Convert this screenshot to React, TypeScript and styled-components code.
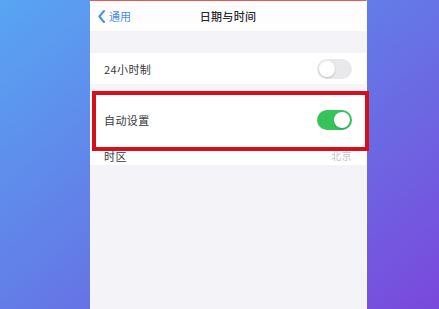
import React from "react";
import styled, { createGlobalStyle } from "styled-components";

const Global = createGlobalStyle`
  html, body { margin: 0; padding: 0; }
  body {
    width: 439px; height: 309px; overflow: hidden;
    font-family: "Noto Sans CJK SC", "Noto Sans", sans-serif;
  }
`;

const Stage = styled.div`
  width: 439px;
  height: 309px;
  background: linear-gradient(140deg, #58a5f3 0%, #6479e6 50%, #7a48dc 100%);
  padding-left: 90px;
  box-sizing: border-box;
  display: flex;
`;

const Phone = styled.div`
  position: relative;
  width: 277px;
  height: 309px;
  background: #f3f3f8;
  border-top: 1px solid #e45a5a;
  border-right: 1px solid #fbfbff;
  box-sizing: border-box;
  display: flex;
  flex-direction: column;
`;

const NavBar = styled.div`
  height: 30px;
  background: #fdfdfe;
  display: grid;
  grid-template-columns: 1fr auto 1fr;
  align-items: center;
  padding: 0 8px;
`;

const Back = styled.div`
  display: flex;
  align-items: center;
  gap: 4px;
  color: #4b8fe8;
  font-size: 11px;
`;

const Title = styled.div`
  font-size: 11px;
  font-weight: 500;
  color: #2a2a2e;
  letter-spacing: 0.3px;
`;

const Spacer = styled.div<{ $h: number; $bg?: string }>`
  height: ${(p) => p.$h}px;
  background: ${(p) => p.$bg || "transparent"};
`;

const Row = styled.div<{ $h: number; $pt?: number }>`
  height: ${(p) => p.$h}px;
  background: #ffffff;
  display: flex;
  align-items: center;
  justify-content: space-between;
  padding: ${(p) => p.$pt || 0}px 14px 0 14px;
  box-sizing: border-box;
`;

const Label = styled.span`
  font-size: 11px;
  color: #38383c;
  letter-spacing: 0.4px;
`;

const Detail = styled.span`
  font-size: 10px;
  color: #c4c4c8;
  letter-spacing: 0.5px;
`;

const Toggle = styled.div<{ $on: boolean }>`
  position: relative;
  width: 35px;
  height: 20px;
  border-radius: 10px;
  background: ${(p) => (p.$on ? "#35c35a" : "#e9e9ec")};
  &::after {
    content: "";
    position: absolute;
    top: 2px;
    left: ${(p) => (p.$on ? "17px" : "2px")};
    width: 16px;
    height: 16px;
    border-radius: 50%;
    background: #ffffff;
    box-shadow: 0 1px 2px rgba(0, 0, 0, 0.18);
  }
`;

const Highlight = styled.div`
  position: absolute;
  left: 2px;
  top: 90px;
  width: 277px;
  height: 60px;
  border: 4px solid #d5101c;
  box-sizing: border-box;
  pointer-events: none;
`;

export default function App() {
  return (
    <>
      <Global />
      <Stage>
        <Phone>
          <NavBar>
            <Back>
              <svg width="7" height="13" viewBox="0 0 7 13">
                <polyline
                  points="6,1 1.3,6.5 6,12"
                  fill="none"
                  stroke="#4b8fe8"
                  strokeWidth="2"
                  strokeLinecap="round"
                  strokeLinejoin="round"
                />
              </svg>
              <span>通用</span>
            </Back>
            <Title>日期与时间</Title>
            <div />
          </NavBar>
          <Spacer $h={22} />
          <Row $h={31}>
            <Label>24小时制</Label>
            <Toggle $on={false} />
          </Row>
          <Spacer $h={8} $bg="#f6f6fa" />
          <Row $h={54} $pt={2}>
            <Label>自动设置</Label>
            <Toggle $on={true} />
          </Row>
          <Row $h={19}>
            <Label>时区</Label>
            <Detail>北京</Detail>
          </Row>
          <Highlight />
        </Phone>
      </Stage>
    </>
  );
}
